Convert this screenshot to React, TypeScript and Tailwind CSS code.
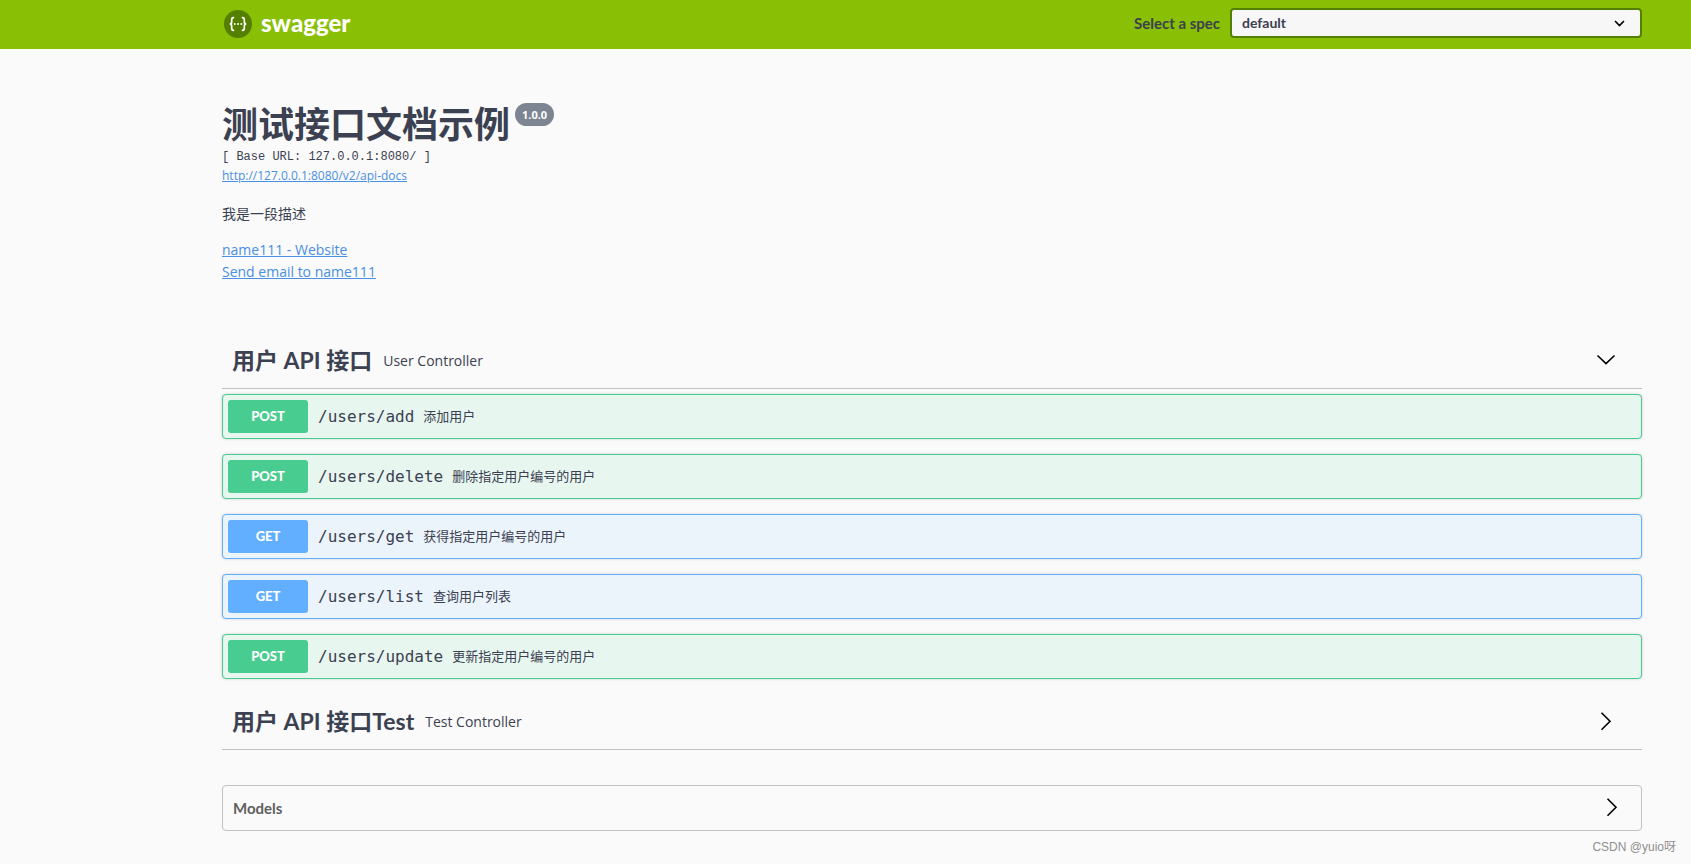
type Method = 'GET' | 'POST'

type Operation = {
  method: Method
  path: string
  summary: string
}

const operations: Operation[] = [
  { method: 'POST', path: '/users/add', summary: '添加用户' },
  { method: 'POST', path: '/users/delete', summary: '删除指定用户编号的用户' },
  { method: 'GET', path: '/users/get', summary: '获得指定用户编号的用户' },
  { method: 'GET', path: '/users/list', summary: '查询用户列表' },
  { method: 'POST', path: '/users/update', summary: '更新指定用户编号的用户' },
]

const blockStyles: Record<Method, string> = {
  GET: 'border-[#61affe] bg-[#ebf3fb]',
  POST: 'border-[#49cc90] bg-[#e8f6f0]',
}

const badgeStyles: Record<Method, string> = {
  GET: 'bg-[#61affe]',
  POST: 'bg-[#49cc90]',
}

const headingFont = "font-[Lato,'Noto_Sans_CJK_SC',sans-serif]"

function Arrow({ open = false }: { open?: boolean }) {
  return (
    <svg
      width="20"
      height="20"
      viewBox="0 0 20 20"
      fill="none"
      stroke="#000"
      strokeWidth="1.6"
      aria-hidden="true"
    >
      <path d={open ? 'M1.5 4.5 10 12.7 18.5 4.5' : 'M5.5 .7 14 9.2 5.5 17.7'} />
    </svg>
  )
}

function Logo() {
  return (
    <a href="#" className="flex items-center gap-[9px] text-white">
      <svg width="30" height="30" viewBox="0 0 30 30" aria-hidden="true">
        <circle cx="16" cy="16" r="14" fill="#547f00" />
        <g fill="none" stroke="#fff" strokeWidth="1.7">
          <path d="M12.2 9.6h-.7c-1.3 0-1.8.7-1.8 1.9v2.2c0 1.5-.6 2.3-2 2.3 1.4 0 2 .8 2 2.3v2.2c0 1.2.5 1.9 1.8 1.9h.7" />
          <path d="M19.8 9.6h.7c1.3 0 1.8.7 1.8 1.9v2.2c0 1.5.6 2.3 2 2.3-1.4 0-2 .8-2 2.3v2.2c0 1.2-.5 1.9-1.8 1.9h-.7" />
        </g>
        <g fill="#fff">
          <circle cx="12.7" cy="16" r="1" />
          <circle cx="16" cy="16" r="1" />
          <circle cx="19.3" cy="16" r="1" />
        </g>
      </svg>
      <span className="font-[Lato,sans-serif] text-2xl font-black">swagger</span>
    </a>
  )
}

function Topbar() {
  return (
    <header className="bg-[#89bf04] pl-[222px] pr-[49px]">
      <div className="flex h-[49px] items-center justify-between pb-[3px]">
        <Logo />

        <div className="flex items-center gap-[10px]">
          <label
            htmlFor="spec"
            className="font-[Lato,sans-serif] text-[15px] font-bold text-[#3b4151]"
          >
            Select a spec
          </label>

          <div className="relative">
            <select
              id="spec"
              className="block h-[30px] w-[412px] appearance-none rounded-sm border-2 border-[#547f00] bg-[#f7f7f7] px-[10px] font-[Lato,sans-serif] text-sm leading-5 font-bold text-[#3b4151]"
            >
              <option>default</option>
            </select>
            <svg
              className="pointer-events-none absolute top-[10px] right-[17px]"
              width="11"
              height="11"
              viewBox="0 0 11 11"
              fill="none"
              stroke="#000"
              strokeWidth="1.7"
              strokeLinecap="round"
              aria-hidden="true"
            >
              <path d="M1.5 3.5 5.5 7.5 9.5 3.5" />
            </svg>
          </div>
        </div>
      </div>
    </header>
  )
}

function Info() {
  return (
    <section className="pt-[50px]">
      <h1 className="flex items-start gap-[5px] text-4xl leading-[50px] font-bold">
        <span className={headingFont}>测试接口文档示例</span>
        <small className="mt-1 flex h-[23px] items-center rounded-full bg-[#7d8492] px-[7px] text-[11px] font-bold text-white">
          1.0.0
        </small>
      </h1>
      <p className="mt-[3px] font-[Liberation_Mono,monospace] text-xs leading-[10px]">
        [ Base URL: 127.0.0.1:8080/ ]
      </p>
      <a href="#" className="mt-1 block text-xs leading-5 text-[#4990e2] underline">
        http://127.0.0.1:8080/v2/api-docs
      </a>

      <p className="mt-[18px] text-sm">我是一段描述</p>

      <div className="mt-[15px] flex flex-col items-start text-sm leading-[22px] text-[#4990e2]">
        <a href="#" className="underline">
          name111 - Website
        </a>
        <a href="#" className="underline">
          Send email to name111
        </a>
      </div>
    </section>
  )
}

type TagHeaderProps = {
  title: string
  description: string
  open?: boolean
}

function TagHeader({ title, description, open }: TagHeaderProps) {
  return (
    <h2 className="border-b border-[#c0c1c5]">
      <button
        type="button"
        aria-expanded={!!open}
        className="flex h-[55px] w-full items-center pr-[26px] pl-[10px] text-left"
      >
        <span className={`${headingFont} text-[23px] font-bold`}>{title}</span>
        <small className="flex-1 pl-[11px] text-sm">{description}</small>
        <Arrow open={open} />
      </button>
    </h2>
  )
}

function OperationBlock({ method, path, summary }: Operation) {
  return (
    <button
      type="button"
      className={`flex w-full items-center rounded border p-[5px] text-left shadow-[0_0_3px_rgba(0,0,0,0.19)] ${blockStyles[method]}`}
    >
      <span
        className={`flex h-[33px] w-20 items-center justify-center rounded-[3px] font-[Lato,sans-serif] text-[13px] font-black text-white ${badgeStyles[method]}`}
      >
        {method}
      </span>
      <span className="pr-[9px] pl-[10px] font-[DejaVu_Sans_Mono,monospace] text-base">
        {path}
      </span>
      <span className="text-[13px]">{summary}</span>
    </button>
  )
}

export default function App() {
  return (
    <div className="min-h-screen bg-[#fafafa] font-['Open_Sans','Noto_Sans_CJK_SC',sans-serif] text-[#3b4151]">
      <Topbar />

      <main className="pr-[49px] pl-[222px]">
        <Info />

        <section className="mt-[50px]">
          <TagHeader title="用户 API 接口" description="User Controller" open />
          <div className="mt-[5px] flex flex-col gap-[15px]">
            {operations.map((operation) => (
              <OperationBlock key={operation.path} {...operation} />
            ))}
          </div>
        </section>

        <section className="mt-[15px]">
          <TagHeader title="用户 API 接口Test" description="Test Controller" />
        </section>

        <section className="mt-[35px] rounded border border-[#c0c1c5]">
          <button
            type="button"
            aria-expanded={false}
            className="flex h-11 w-full items-center justify-between pr-[19px] pl-[10px] font-[Lato,sans-serif] text-[15px] font-bold text-[#606060]"
          >
            Models
            <Arrow />
          </button>
        </section>
      </main>

      <footer className="flex justify-end pt-2 pr-[15px] font-['Liberation_Sans','Noto_Sans_CJK_SC',sans-serif] text-xs text-[#8f8f8f]">
        CSDN @yuio呀
      </footer>
    </div>
  )
}
